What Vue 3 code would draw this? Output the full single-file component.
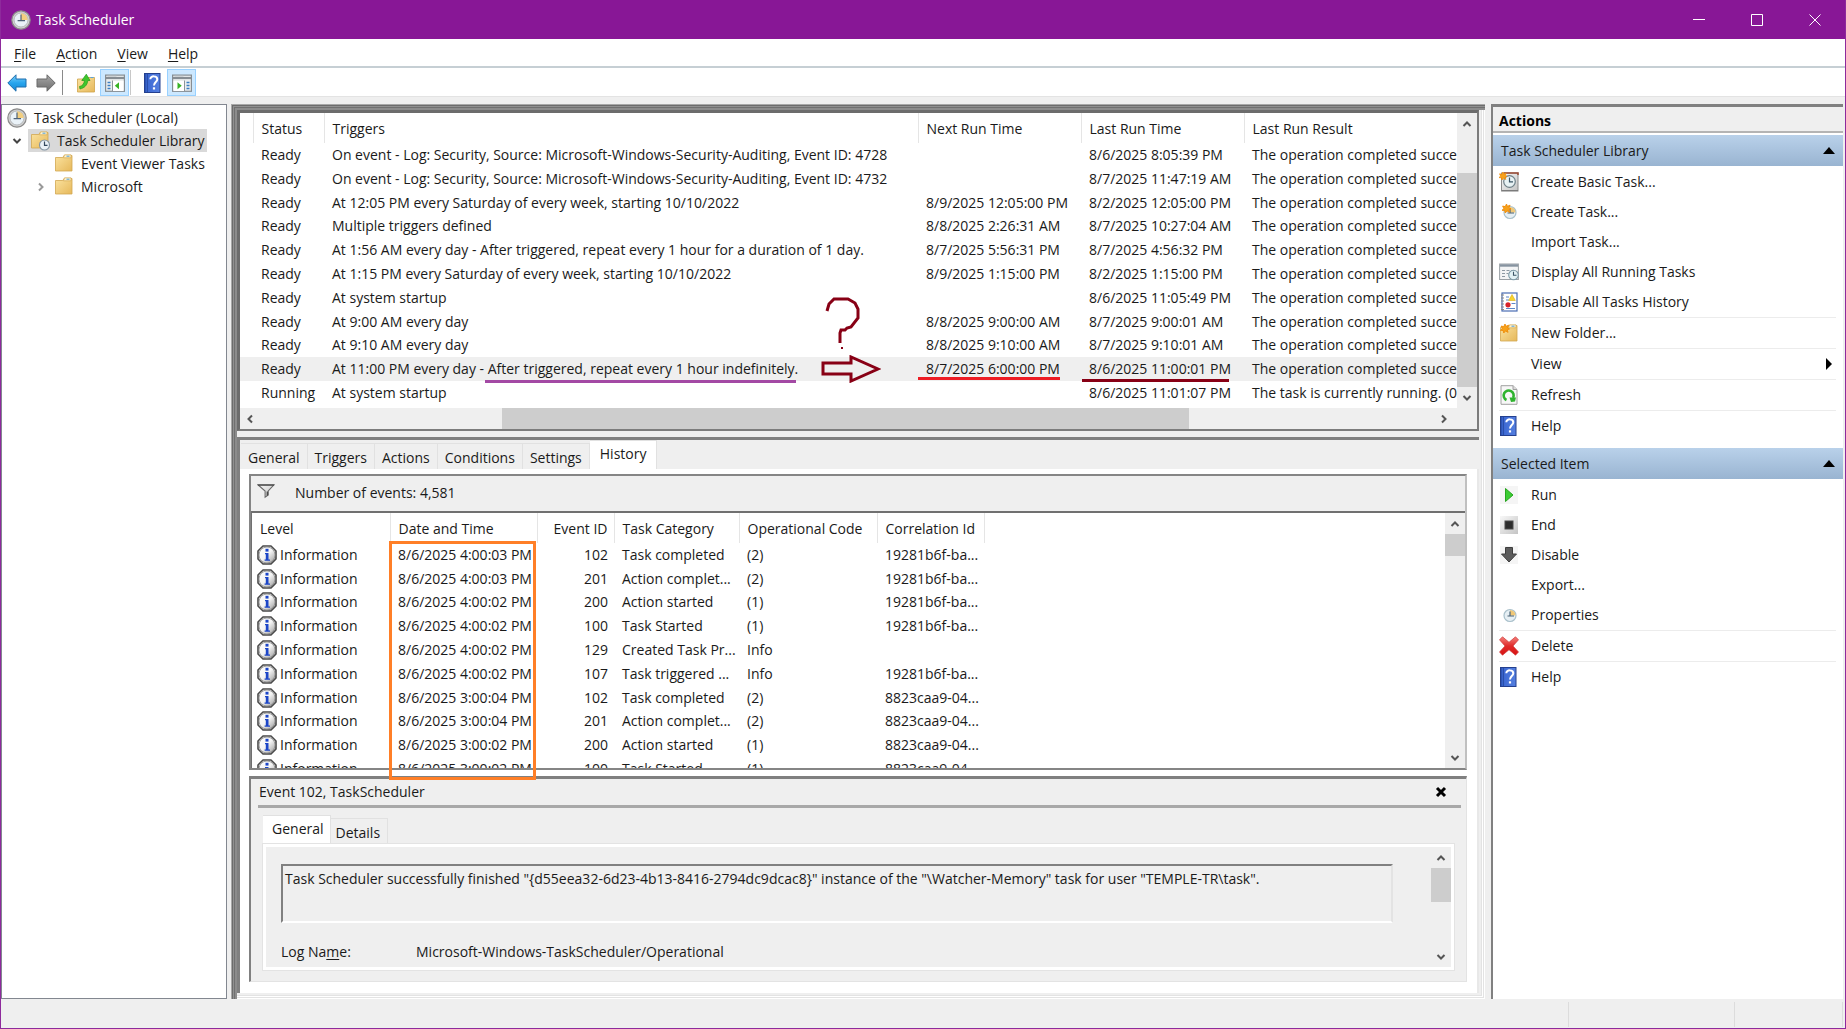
<script setup>
const menus = [['F', 'ile'], ['A', 'ction'], ['V', 'iew'], ['H', 'elp']]

const done = 'The operation completed successfully.'
const tasks = [
  { status: 'Ready', trigger: 'On event - Log: Security, Source: Microsoft-Windows-Security-Auditing, Event ID: 4728', next: '', last: '8/6/2025 8:05:39 PM', result: done },
  { status: 'Ready', trigger: 'On event - Log: Security, Source: Microsoft-Windows-Security-Auditing, Event ID: 4732', next: '', last: '8/7/2025 11:47:19 AM', result: done },
  { status: 'Ready', trigger: 'At 12:05 PM every Saturday of every week, starting 10/10/2022', next: '8/9/2025 12:05:00 PM', last: '8/2/2025 12:05:00 PM', result: done },
  { status: 'Ready', trigger: 'Multiple triggers defined', next: '8/8/2025 2:26:31 AM', last: '8/7/2025 10:27:04 AM', result: done },
  { status: 'Ready', trigger: 'At 1:56 AM every day - After triggered, repeat every 1 hour for a duration of 1 day.', next: '8/7/2025 5:56:31 PM', last: '8/7/2025 4:56:32 PM', result: done },
  { status: 'Ready', trigger: 'At 1:15 PM every Saturday of every week, starting 10/10/2022', next: '8/9/2025 1:15:00 PM', last: '8/2/2025 1:15:00 PM', result: done },
  { status: 'Ready', trigger: 'At system startup', next: '', last: '8/6/2025 11:05:49 PM', result: done },
  { status: 'Ready', trigger: 'At 9:00 AM every day', next: '8/8/2025 9:00:00 AM', last: '8/7/2025 9:00:01 AM', result: done },
  { status: 'Ready', trigger: 'At 9:10 AM every day', next: '8/8/2025 9:10:00 AM', last: '8/7/2025 9:10:01 AM', result: done },
  { status: 'Ready', trigger: 'At 11:00 PM every day - After triggered, repeat every 1 hour indefinitely.', next: '8/7/2025 6:00:00 PM', last: '8/6/2025 11:00:01 PM', result: done, selected: true },
  { status: 'Running', trigger: 'At system startup', next: '', last: '8/6/2025 11:01:07 PM', result: 'The task is currently running. (0x' },
]

const tabs = ['General', 'Triggers', 'Actions', 'Conditions', 'Settings', 'History']

const events = [
  ['8/6/2025 4:00:03 PM', 102, 'Task completed', '(2)', '19281b6f-ba...'],
  ['8/6/2025 4:00:03 PM', 201, 'Action complet...', '(2)', '19281b6f-ba...'],
  ['8/6/2025 4:00:02 PM', 200, 'Action started', '(1)', '19281b6f-ba...'],
  ['8/6/2025 4:00:02 PM', 100, 'Task Started', '(1)', '19281b6f-ba...'],
  ['8/6/2025 4:00:02 PM', 129, 'Created Task Pr...', 'Info', ''],
  ['8/6/2025 4:00:02 PM', 107, 'Task triggered ...', 'Info', '19281b6f-ba...'],
  ['8/6/2025 3:00:04 PM', 102, 'Task completed', '(2)', '8823caa9-04...'],
  ['8/6/2025 3:00:04 PM', 201, 'Action complet...', '(2)', '8823caa9-04...'],
  ['8/6/2025 3:00:02 PM', 200, 'Action started', '(1)', '8823caa9-04...'],
  ['8/6/2025 3:00:02 PM', 100, 'Task Started', '(1)', '8823caa9-04...'],
]

const groups = [
  {
    title: 'Task Scheduler Library',
    items: [
      { label: 'Create Basic Task...', icon: 'basic' },
      { label: 'Create Task...', icon: 'create' },
      { label: 'Import Task...' },
      { label: 'Display All Running Tasks', icon: 'running' },
      { label: 'Disable All Tasks History', icon: 'history' },
      { label: 'New Folder...', icon: 'newfolder', line: true },
      { label: 'View', line: true, more: true },
      { label: 'Refresh', icon: 'refresh', line: true },
      { label: 'Help', icon: 'help', line: true },
    ],
  },
  {
    title: 'Selected Item',
    items: [
      { label: 'Run', icon: 'run' },
      { label: 'End', icon: 'end' },
      { label: 'Disable', icon: 'disable' },
      { label: 'Export...' },
      { label: 'Properties', icon: 'props' },
      { label: 'Delete', icon: 'delete', line: true },
      { label: 'Help', icon: 'help', line: true },
    ],
  },
]
</script>

<template>
  <div class="window">
    <svg class="defs" aria-hidden="true">
      <defs>
        <linearGradient id="g-folder" x1="0" y1="0" x2="1" y2="1">
          <stop offset="0" stop-color="#fbe3a0" /><stop offset="1" stop-color="#e6b85a" />
        </linearGradient>
        <linearGradient id="g-blue" x1="0" y1="0" x2="0" y2="1">
          <stop offset="0" stop-color="#7fd0fa" /><stop offset=".5" stop-color="#27a5ee" /><stop offset="1" stop-color="#1787d2" />
        </linearGradient>
        <linearGradient id="g-grey" x1="0" y1="0" x2="0" y2="1">
          <stop offset="0" stop-color="#a8a8a8" /><stop offset="1" stop-color="#6c6c6c" />
        </linearGradient>
        <linearGradient id="g-help" x1="0" y1="0" x2="1" y2="0">
          <stop offset="0" stop-color="#24479f" /><stop offset=".15" stop-color="#3b67d2" /><stop offset="1" stop-color="#5580e0" />
        </linearGradient>
        <linearGradient id="g-info" x1="0" y1="0" x2="1" y2="1">
          <stop offset="0" stop-color="#ffffff" /><stop offset=".5" stop-color="#f4f4f4" /><stop offset="1" stop-color="#9a9a9a" />
        </linearGradient>
        <linearGradient id="g-red" x1="0" y1="0" x2="0" y2="1">
          <stop offset="0" stop-color="#f4817c" /><stop offset=".5" stop-color="#e02a2a" /><stop offset="1" stop-color="#d81212" />
        </linearGradient>
        <linearGradient id="g-panel" x1="0" y1="0" x2="1" y2="1">
          <stop offset="0" stop-color="#f8f8f8" /><stop offset="1" stop-color="#c4c4c4" />
        </linearGradient>
        <symbol id="i-clock" viewBox="0 0 20 20">
          <circle cx="10" cy="10" r="9.2" fill="#d2d2d2" stroke="#8a8a8a" stroke-width="1.200" />
          <circle cx="10" cy="10" r="7" fill="#eaf2f8" stroke="#a9adb0" stroke-width=".8" />
          <path d="M10 10V3.200a6.800 6.800 0 0 1 6.800 6.800z" fill="#f3cf80" />
          <path d="M10 4.600V10.600M6.600 10.600H14" stroke="#4f6378" stroke-width="1.200" fill="none" />
        </symbol>
        <symbol id="i-folder" viewBox="0 0 20 20">
          <path d="M1.500 3.500V17h16.500V1.500h-8l-1.200 2z" fill="url(#g-folder)" stroke="#d2a750" stroke-width=".8" />
          <path d="M10.500 .800h6.500v3h-7.500z" fill="#fff4d2" stroke="#d2a750" stroke-width=".7" />
          <path d="M12.500 2.200h3" stroke="#5aa5dc" stroke-width="1.100" />
        </symbol>
        <symbol id="i-library" viewBox="0 0 20 20">
          <use href="#i-folder" />
          <circle cx="14.500" cy="14" r="5" fill="#eaf2f8" stroke="#8395a4" stroke-width="1.100" />
          <path d="M14.500 10.500v3.800h3" stroke="#34495e" stroke-width="1.200" fill="none" />
        </symbol>
        <symbol id="i-back" viewBox="0 0 20 20">
          <path d="M.8 10L9 1.800V6h10v8H9v4.200z" fill="url(#g-blue)" stroke="#1f6fae" />
        </symbol>
        <symbol id="i-forward" viewBox="0 0 20 20">
          <path d="M19.200 10L11 1.800V6H1v8h10v4.200z" fill="url(#g-grey)" stroke="#6b6b6b" />
        </symbol>
        <symbol id="i-up" viewBox="0 0 20 20">
          <path d="M1.500 6V19h17V4.500H10L9 6z" fill="url(#g-folder)" stroke="#cfa34a" stroke-width=".8" />
          <path d="M14.500 4.500h3" stroke="#5aa5dc" />
          <path d="M3.500 13.500c3-.6 4.500-2.500 5-6H5.800L10.300 1.200 14 7.500h-2.200c-.5 5-3.600 7.500-7.800 8.500z" fill="#3fc62d" stroke="#239a1a" stroke-width=".7" />
        </symbol>
        <symbol id="i-pane-left" viewBox="0 0 20 20">
          <rect x=".6" y="2.100" width="18.800" height="16.200" fill="#eceeef" stroke="#868d93" stroke-width="1.200" />
          <path d="M1 5h18" stroke="#868d93" stroke-width="2.200" />
          <path d="M2.500 3.300h9" stroke="#c7ccd0" />
          <rect x="7.500" y="8" width="11" height="10" fill="#fff" />
          <path d="M7.500 7.500V18" stroke="#8d949a" />
          <path d="M2.500 9.500h3M2.500 12.500h3M2.500 15.500h3" stroke="#3b7fc4" stroke-width="1.300" />
          <path d="M14 9.300v7l-4.200-3.500z" fill="#37b324" />
        </symbol>
        <symbol id="i-pane-right" viewBox="0 0 20 20">
          <rect x=".6" y="2.100" width="18.800" height="16.200" fill="#eceeef" stroke="#868d93" stroke-width="1.200" />
          <path d="M1 5h18" stroke="#868d93" stroke-width="2.200" />
          <path d="M2.500 3.300h9" stroke="#c7ccd0" />
          <rect x="1.500" y="8" width="11" height="10" fill="#fff" />
          <path d="M12.500 7.500V18" stroke="#8d949a" />
          <path d="M14.500 9.500h3M14.500 12.500h3M14.500 15.500h3" stroke="#3b7fc4" stroke-width="1.300" />
          <path d="M5.500 9.300v7l4.200-3.500z" fill="#37b324" />
        </symbol>
        <symbol id="i-help" viewBox="0 0 20 20">
          <rect x="1.500" y=".5" width="15.500" height="19" fill="url(#g-help)" stroke="#24408f" />
          <path d="M4.500 1v18" stroke="#24479f" stroke-width=".8" />
          <path d="M7.300 6.300c0-4 7-3.800 7 0 0 2.700-3.300 2.900-3.300 6.200" stroke="#fff" stroke-width="2" fill="none" />
          <rect x="9.900" y="14.300" width="2.200" height="2.200" fill="#fff" />
        </symbol>
        <symbol id="i-star" viewBox="0 0 10 10">
          <path d="M5 0l1 2.600L9 1.300 7.800 4.200 10 5.500 7.500 6.400 8.400 9.300 5.600 7.700 3.600 10 3 7.200 0 7 2.100 5 .7 2.300l2.900.6z" fill="#f7a11a" stroke="#ee8c0a" stroke-width="1" />
        </symbol>
        <symbol id="i-basic" viewBox="0 0 20 20">
          <rect x="2.500" y="1" width="16.500" height="18" fill="url(#g-panel)" stroke="#8c8c8c" />
          <path d="M5 1h14v2" stroke="#9b4a33" stroke-width="1.500" fill="none" />
          <path d="M3 18.600h16" stroke="#777" />
          <circle cx="10.500" cy="9.500" r="5.800" fill="#e8f2f4" stroke="#6f8088" stroke-width="1.200" />
          <path d="M10.500 5.500v4.300H14" stroke="#3b5565" stroke-width="1.200" fill="none" />
          <use href="#i-star" x="0" y="0" width="8" height="8" />
        </symbol>
        <symbol id="i-props" viewBox="0 0 20 20">
          <circle cx="11" cy="10.500" r="6" fill="#e6eff4" stroke="#a9c0cb" stroke-width="1.200" />
          <path d="M11 10.500V5a5.500 5.500 0 0 1 5.500 5.500z" fill="#f1c877" />
          <path d="M11 6.500v4.500h4M8.500 11h2" stroke="#4b6375" stroke-width="1.200" fill="none" />
        </symbol>
        <symbol id="i-create" viewBox="0 0 20 20">
          <use href="#i-props" />
          <use href="#i-star" x="3" y="2" width="9" height="9" />
        </symbol>
        <symbol id="i-running" viewBox="0 0 20 20">
          <rect x=".6" y="2" width="18.800" height="15.500" fill="#f3f4f5" stroke="#9aa0a5" />
          <path d="M1 3.500h18" stroke="#8693a0" stroke-width="2.400" />
          <path d="M3 8.500h3M7.500 8.500h3M12 8.500h3M3 11.500h3M7.500 11.500h2M3 14.500h3" stroke="#8c98a2" stroke-width="1.200" />
          <circle cx="14.500" cy="13" r="4.800" fill="#e2f1f4" stroke="#7d9aa6" stroke-width="1.100" />
          <path d="M14.500 9.700v3.600h3" stroke="#3b5565" stroke-width="1.100" fill="none" />
        </symbol>
        <symbol id="i-history" viewBox="0 0 20 20">
          <rect x="3" y="1" width="15" height="18" fill="#fff" stroke="#4a6db3" stroke-width="1.200" />
          <path d="M2 3h3M2 6h3M2 9h3M2 12h3M2 15h3M2 17.500h3" stroke="#888" stroke-width="1.200" />
          <path d="M7 5h3M7 8h3M12.500 11.500h4M7 16.500h9" stroke="#5d86c8" stroke-width="1.100" />
          <path d="M13 2.500l3.300 6h-6.600z" fill="#f8d431" stroke="#d8ac12" stroke-width=".6" />
          <circle cx="9" cy="12.800" r="2.600" fill="#d8232a" />
        </symbol>
        <symbol id="i-newfolder" viewBox="0 0 20 20">
          <use href="#i-folder" y="1" />
          <use href="#i-star" x="1" y="1" width="10" height="9" />
        </symbol>
        <symbol id="i-refresh" viewBox="0 0 20 20">
          <path d="M2 .7h12L18 4.500V19.300H2z" fill="#f7f7f7" stroke="#a0a0a0" />
          <path d="M14 .7V4.500h4" fill="#ddd" stroke="#a0a0a0" />
          <path d="M7.500 15A5 5 0 1 1 14 13" stroke="#2fb32f" stroke-width="2.600" fill="none" />
          <path d="M10.500 12.500h6.500l-1 4-4 .5z" fill="#2fb32f" />
        </symbol>
        <symbol id="i-run" viewBox="0 0 20 20">
          <rect x="1" y="1" width="18" height="18" fill="#f5f5f5" />
          <path d="M6.500 3.500v13l7.500-6.500z" fill="#3ccc33" stroke="#27a41f" />
        </symbol>
        <symbol id="i-end" viewBox="0 0 20 20">
          <rect x="1" y="1" width="18" height="18" fill="url(#g-panel)" />
          <rect x="6" y="6" width="8" height="8" fill="#2c2c2c" stroke="#4a4a4a" />
        </symbol>
        <symbol id="i-disable" viewBox="0 0 20 20">
          <rect x="1" y="1" width="18" height="18" fill="#f5f5f5" />
          <path d="M6.500 2.500h7V9H17.500l-7.500 8-7.500-8h4z" fill="#5c5c5c" stroke="#3e3e3e" />
        </symbol>
        <symbol id="i-delete" viewBox="0 0 20 20">
          <path d="M3.500.8L10 6.300 16.500.8l3 3L14 10l5.500 6-3 3.200L10 13.700 3.500 19.200l-3-3.200L6 10 .5 3.800z" fill="url(#g-red)" stroke="#cf3a3a" stroke-width=".7" />
        </symbol>
        <symbol id="i-info" viewBox="0 0 20 20">
          <path d="M6 1h8l5 5v8l-5 5H6l-5-5V6z" fill="url(#g-info)" stroke="#4a4a4a" stroke-width="1.600" stroke-linejoin="round" />
          <circle cx="10" cy="10" r="8" fill="url(#g-info)" stroke="#8c8c8c" stroke-width=".8" />
          <rect x="8.500" y="3.800" width="3" height="2.800" fill="#1c46c8" />
          <path d="M8 7.900h3.500v6.600H13v1.300H7.600v-1.300h1.200V9.200H8z" fill="#1c46c8" />
        </symbol>
        <symbol id="i-filter" viewBox="0 0 20 16">
          <path d="M1 1h18l-6.500 7v4.500L9 15V8z" fill="url(#g-panel)" stroke="#6a6a6a" stroke-width="1.200" />
          <path d="M1 1.500h18M11.500 8.500V13" stroke="#4a4a4a" stroke-width="1.600" />
        </symbol>
        <symbol id="i-chev" viewBox="0 0 10 10">
          <path d="M1.500 7L5 3.500 8.500 7" fill="none" stroke="currentColor" stroke-width="2" />
        </symbol>
      </defs>
    </svg>

    <header class="title-bar">
      <svg class="ico"><use href="#i-clock" /></svg>
      <h1>Task Scheduler</h1>
      <button class="win-btn" aria-label="Minimize"><svg viewBox="0 0 12 12"><path d="M0 5.500h12" /></svg></button>
      <button class="win-btn" aria-label="Maximize"><svg viewBox="0 0 12 12"><path d="M.5.5h11v11H.5z" /></svg></button>
      <button class="win-btn" aria-label="Close"><svg viewBox="0 0 12 12"><path d="M.5.5l11 11M11.500.5l-11 11" /></svg></button>
    </header>

    <nav class="menu-bar">
      <button v-for="[key, rest] in menus" :key="key"><u>{{ key }}</u>{{ rest }}</button>
    </nav>

    <div class="toolbar">
      <button class="tool" aria-label="Back"><svg class="ico"><use href="#i-back" /></svg></button>
      <button class="tool" aria-label="Forward"><svg class="ico"><use href="#i-forward" /></svg></button>
      <span class="divider"></span>
      <button class="tool" aria-label="Up one level"><svg class="ico"><use href="#i-up" /></svg></button>
      <button class="tool pressed" aria-label="Show console tree"><svg class="ico"><use href="#i-pane-left" /></svg></button>
      <span class="divider light"></span>
      <button class="tool" aria-label="Help"><svg class="ico"><use href="#i-help" /></svg></button>
      <button class="tool pressed" aria-label="Show action pane"><svg class="ico"><use href="#i-pane-right" /></svg></button>
    </div>

    <main class="body">
      <nav class="tree">
        <button class="node root"><svg class="ico"><use href="#i-clock" /></svg><span>Task Scheduler (Local)</span></button>
        <div class="branch">
          <svg class="twist down"><use href="#i-chev" /></svg>
          <button class="node current"><svg class="ico"><use href="#i-library" /></svg><span>Task Scheduler Library</span></button>
        </div>
        <div class="branch deep">
          <span class="twist"></span>
          <button class="node"><svg class="ico"><use href="#i-folder" /></svg><span>Event Viewer Tasks</span></button>
        </div>
        <div class="branch deep">
          <svg class="twist right"><use href="#i-chev" /></svg>
          <button class="node"><svg class="ico"><use href="#i-folder" /></svg><span>Microsoft</span></button>
        </div>
      </nav>

      <section class="centre">
        <div class="task-pane">
          <div class="task-view">
            <div class="clip">
              <table class="list tasks">
                <colgroup><col class="t0" /><col class="t1" /><col class="t2" /><col class="t3" /><col class="t3" /><col /></colgroup>
                <thead>
                  <tr><th></th><th>Status</th><th>Triggers</th><th>Next Run Time</th><th>Last Run Time</th><th>Last Run Result</th></tr>
                </thead>
                <tbody>
                  <tr v-for="(t, i) in tasks" :key="i" :class="{ selected: t.selected }">
                    <td></td><td>{{ t.status }}</td><td>{{ t.trigger }}</td><td>{{ t.next }}</td><td>{{ t.last }}</td><td>{{ t.result }}</td>
                  </tr>
                </tbody>
              </table>
            </div>
            <div class="vbar">
              <button aria-label="Scroll up"><svg><use href="#i-chev" /></svg></button>
              <i class="thumb task-thumb"></i>
              <button class="end" aria-label="Scroll down"><svg class="down"><use href="#i-chev" /></svg></button>
            </div>
          </div>
          <div class="hbar">
            <button aria-label="Scroll left"><svg class="left"><use href="#i-chev" /></svg></button>
            <i class="hthumb"></i>
            <button class="end" aria-label="Scroll right"><svg class="right"><use href="#i-chev" /></svg></button>
          </div>
          <i class="mark purple"></i>
          <i class="mark red"></i>
          <i class="mark maroon"></i>
          <svg class="question" viewBox="0 0 36 54"><path d="M2 14L4 7 9 2H23L30 6 33 12V21L26 30 22 31 20 33H16L15 36V46" /><path d="M17 50v2" class="dot" /></svg>
          <svg class="arrow" viewBox="0 0 60 28"><path d="M2 8h28V2l27 12-27 12v-7H2z" /></svg>
        </div>

        <div class="detail-pane">
          <div class="tabs" role="tablist">
            <button v-for="t in tabs" :key="t" role="tab" :class="['tab', { on: t === 'History' }]">{{ t }}</button>
          </div>
          <div class="page">
            <div class="events">
              <div class="events-head">
                <svg><use href="#i-filter" /></svg>
                <span>Number of events: 4,581</span>
              </div>
              <div class="events-list">
                <div class="clip">
                  <table class="list log">
                    <colgroup><col class="e0" /><col class="e1" /><col class="e2" /><col class="e3" /><col class="e4" /><col class="e5" /><col /></colgroup>
                    <thead>
                      <tr><th>Level</th><th>Date and Time</th><th class="num">Event ID</th><th>Task Category</th><th>Operational Code</th><th>Correlation Id</th><th></th></tr>
                    </thead>
                    <tbody>
                      <tr v-for="(e, i) in events" :key="i">
                        <td class="level"><div><svg class="ico"><use href="#i-info" /></svg>Information</div></td>
                        <td>{{ e[0] }}</td><td class="num">{{ e[1] }}</td><td>{{ e[2] }}</td><td>{{ e[3] }}</td><td>{{ e[4] }}</td><td></td>
                      </tr>
                    </tbody>
                  </table>
                </div>
                <div class="vbar">
                  <button aria-label="Scroll up"><svg><use href="#i-chev" /></svg></button>
                  <i class="thumb event-thumb"></i>
                  <button class="end" aria-label="Scroll down"><svg class="down"><use href="#i-chev" /></svg></button>
                </div>
              </div>
              <i class="highlight"></i>
            </div>

            <div class="event">
              <div class="event-head">
                <span>Event 102, TaskScheduler</span>
                <button aria-label="Close"><svg viewBox="0 0 12 12"><path d="M2 2l8 8M10 2l-8 8" /></svg></button>
              </div>
              <div class="tabs small" role="tablist">
                <button class="tab on" role="tab">General</button>
                <button class="tab" role="tab">Details</button>
              </div>
              <div class="event-page">
                <div class="event-body">
                  <textarea readonly aria-label="Event message" value="Task Scheduler successfully finished &quot;{d55eea32-6d23-4b13-8416-2794dc9dcac8}&quot; instance of the &quot;\Watcher-Memory&quot; task for user &quot;TEMPLE-TR\task&quot;."></textarea>
                  <dl><dt>Log Na<u>m</u>e:</dt><dd>Microsoft-Windows-TaskScheduler/Operational</dd></dl>
                </div>
                <div class="vbar">
                  <button aria-label="Scroll up"><svg><use href="#i-chev" /></svg></button>
                  <i class="thumb body-thumb"></i>
                  <button class="end" aria-label="Scroll down"><svg class="down"><use href="#i-chev" /></svg></button>
                </div>
              </div>
            </div>
          </div>
        </div>
      </section>

      <aside class="actions">
        <h2>Actions</h2>
        <section v-for="g in groups" :key="g.title" class="group">
          <button class="group-head">{{ g.title }}<svg viewBox="0 0 12 8"><path d="M6 0l6 7H0z" /></svg></button>
          <ul>
            <li v-for="a in g.items" :key="a.label" :class="{ line: a.line }">
              <button>
                <svg class="ico"><use v-if="a.icon" :href="'#i-' + a.icon" /></svg>
                <span>{{ a.label }}</span>
                <svg v-if="a.more" class="more" viewBox="0 0 8 12"><path d="M1 0l6 6-6 6z" /></svg>
              </button>
            </li>
          </ul>
        </section>
      </aside>
    </main>

    <footer class="status"><span></span><span></span><span></span></footer>
  </div>
</template>

<style>
body {
  margin: 0;
}
</style>

<style scoped>
* {
  box-sizing: border-box;
}
.window {
  display: flex;
  flex-direction: column;
  height: 100vh;
  background: #efefef;
  border: 1px solid #8e2a9c;
  border-top: 0;
  font: 14px/20px "Open Sans", "Noto Sans", sans-serif;
  color: #1a1a1a;
  overflow: hidden;
}
button {
  margin: 0;
  padding: 0;
  border: 0;
  background: none;
  font: inherit;
  color: inherit;
  text-align: left;
}
.defs {
  position: absolute;
  width: 0;
  height: 0;
}
.ico {
  display: block;
  flex: none;
  width: 20px;
  height: 20px;
}
u {
  text-underline-offset: 2px;
}

.title-bar {
  display: flex;
  align-items: center;
  flex: none;
  height: 39px;
  padding: 0 1px 0 10px;
  background: #881796;
  color: #fff;
}
.title-bar h1 {
  flex: 1;
  margin: 0 0 0 5px;
  font-size: 14px;
  font-weight: 400;
}
.win-btn {
  display: flex;
  align-items: center;
  justify-content: center;
  width: 58px;
  height: 39px;
}
.win-btn svg {
  width: 12px;
  height: 12px;
  fill: none;
  stroke: #fff;
}

.menu-bar {
  display: flex;
  align-items: center;
  gap: 20px;
  flex: none;
  height: 29px;
  padding: 2px 0 0 13px;
  background: #fff;
  border-bottom: 2px solid #c6cfd4;
}
.toolbar {
  display: flex;
  align-items: center;
  flex: none;
  height: 29px;
  padding: 1px 0 0 1px;
  background: #fff;
  border-bottom: 1px solid #e3e3e3;
}
.tool {
  display: flex;
  align-items: center;
  justify-content: center;
  width: 29px;
  height: 27px;
}
.tool.pressed {
  background: #cce8ff;
  border: 1px solid #99d1ff;
}
.divider {
  width: 1px;
  height: 25px;
  margin: 0 8px 0 2px;
  background: #8a8a8a;
}
.divider.light {
  background: #c8c8c8;
  margin: 0 7px 0 1px;
}

.body {
  display: flex;
  flex: 1;
  min-height: 0;
  padding: 7px 2px 0 0;
}
.tree {
  flex: none;
  width: 226px;
  padding-top: 1px;
  background: #fff;
  border: 1px solid #828790;
  margin-right: 4px;
}
.branch {
  display: flex;
  align-items: center;
  padding-left: 10px;
}
.branch.deep {
  padding-left: 34px;
}
.node {
  display: flex;
  align-items: center;
  gap: 7px;
  height: 23px;
  padding: 0 2px;
}
.node.root {
  padding-left: 5px;
}
.node.current {
  background: #d9d9d9;
}
.twist {
  width: 10px;
  height: 10px;
  margin-right: 6px;
  color: #444;
}
.deep .twist {
  color: #999;
}
.down {
  transform: rotate(180deg);
}
.right {
  transform: rotate(90deg);
}
.left {
  transform: rotate(-90deg);
}

.centre {
  display: flex;
  flex-direction: column;
  gap: 6px;
  flex: 1;
  min-width: 0;
  padding: 6px;
  box-shadow:
    inset 1px 1px #a8a8a8, inset 2px 2px #6c6c6c, inset 3px 3px #909090,
    inset 4px 4px #707070, inset 6px 6px #8c8c8c,
    inset -1px -1px #fff, inset -2px -2px #e3e3e3, inset -3px -3px #fff,
    inset -4px -4px #e3e3e3, inset -5px -5px #efefef;
}
.task-pane {
  position: relative;
  flex: none;
  border: 3px solid;
  border-color: #6c6c6c #7c7c7c #7c7c7c #6c6c6c;
  border-right-width: 2px;
  border-bottom-width: 2px;
  background: #fff;
}
.task-view {
  display: flex;
  height: 295px;
}
.clip {
  flex: 1;
  min-width: 0;
  overflow: hidden;
  background: #fff;
}
.list {
  width: 100%;
  border-collapse: collapse;
  table-layout: fixed;
}
.list th,
.list td {
  padding: 0 0 0 8px;
  font-weight: 400;
  text-align: left;
  white-space: nowrap;
  overflow: hidden;
}
.list th {
  height: 30px;
  padding-top: 2px;
  border-right: 1px solid #e5e5e5;
}
.list th:last-child {
  border-right: 0;
}
.list .num {
  padding-left: 0;
  padding-right: 6px;
  text-align: right;
}
.tasks {
  height: 292px;
}
.log {
  height: 268px;
}
.selected {
  background: #efefef;
}
.t0 { width: 13px; }
.t1 { width: 71px; }
.t2 { width: 594px; }
.t3 { width: 163px; }
.e0 { width: 138px; }
.e1 { width: 147px; }
.e2 { width: 77px; }
.e3 { width: 125px; }
.e4 { width: 138px; }
.e5 { width: 107px; }
.list .level {
  padding-left: 5px;
}
.level div {
  display: flex;
  gap: 3px;
}

.vbar {
  display: flex;
  flex-direction: column;
  flex: none;
  width: 20px;
  background: #efefef;
}
.vbar button,
.hbar button {
  display: flex;
  align-items: center;
  justify-content: center;
  width: 20px;
  height: 21px;
  color: #555;
}
.vbar svg,
.hbar svg {
  width: 10px;
  height: 10px;
}
.vbar .end {
  margin-top: auto;
}
.hbar .end {
  margin-left: auto;
  margin-right: 23px;
}
.thumb,
.hthumb {
  background: #cdcdcd;
}
.task-thumb {
  height: 214px;
  margin-top: 39px;
}
.event-thumb {
  height: 22px;
}
.body-thumb {
  height: 34px;
}
.hbar {
  display: flex;
  height: 21px;
  background: #efefef;
}
.hthumb {
  width: 687px;
  margin-left: 242px;
}

.mark {
  position: absolute;
  height: 3px;
}
.mark.purple {
  left: 245px;
  top: 267px;
  width: 311px;
  background: #a349a4;
}
.mark.red {
  left: 678px;
  top: 264px;
  width: 142px;
  background: #ed1c24;
}
.mark.maroon {
  left: 842px;
  top: 266px;
  width: 147px;
  background: #880015;
}
.question,
.arrow {
  position: absolute;
  fill: none;
  stroke: #880015;
  stroke-width: 3px;
}
.question {
  left: 585px;
  top: 184px;
  width: 36px;
  height: 54px;
}
.question .dot {
  stroke-width: 2px;
}
.arrow {
  left: 581px;
  top: 242px;
  width: 60px;
  height: 28px;
}

.detail-pane {
  display: flex;
  flex-direction: column;
  flex: 1;
  min-height: 0;
  border-top: 3px solid #808080;
  border-left: 3px solid #808080;
}
.tabs {
  display: flex;
  align-items: flex-end;
  flex: none;
  height: 29px;
  padding-left: 1px;
}
.tab {
  height: 26px;
  padding: 2px 7px 0;
  border: 1px solid #e1e1e1;
  border-width: 1px 1px 0 0;
  white-space: nowrap;
}
.tab.on {
  height: 29px;
  padding: 0 10px 2px;
  background: #fff;
}
.page {
  display: flex;
  flex-direction: column;
  gap: 6px;
  flex: 1;
  min-height: 0;
  padding: 5px 10px 11px 9px;
  background: #fff;
  border-right: 2px solid #e8e8e8;
}
.events {
  position: relative;
  flex: none;
  border: 2px solid #858585;
  border-right-color: #c0c0c0;
}
.events-head {
  display: flex;
  gap: 20px;
  height: 35px;
  padding: 7px 0 0 6px;
  background: #efefef;
}
.events-head svg {
  width: 18px;
  height: 16px;
}
.events-list {
  display: flex;
  height: 257px;
  border-top: 2px solid #707070;
  border-left: 1px solid #707070;
}
.highlight {
  position: absolute;
  left: 138px;
  top: 65px;
  width: 147px;
  height: 239px;
  border: 3px solid #ff7f27;
}

.event {
  display: flex;
  flex-direction: column;
  flex: 1;
  min-height: 0;
  padding: 0 12px 11px;
  background: #efefef;
  border: 3px solid #808080;
  border-width: 3px 1px 1px 2px;
  border-right-color: #e3e3e3;
  border-bottom-color: #e3e3e3;
}
.event-head {
  display: flex;
  justify-content: space-between;
  align-items: center;
  flex: none;
  height: 29px;
  margin: 0 -7px 7px -5px;
  padding: 0 14px 0 1px;
  border-bottom: 3px solid #a8a8a8;
}
.event-head svg {
  display: block;
  width: 12px;
  height: 12px;
  stroke: #000;
  stroke-width: 3px;
}
.tabs.small {
  padding-left: 0;
}
.small .tab {
  padding-left: 5px;
}
.small .tab.on {
  padding-left: 9px;
  padding-right: 6px;
}
.event-page {
  display: flex;
  flex: 1;
  min-height: 0;
  border: 3px solid #fff;
  outline: 1px solid #e3e3e3;
}
.event-body {
  flex: 1;
  min-width: 0;
  overflow: hidden;
  padding: 17px 38px 0 15px;
}
textarea {
  display: block;
  width: 100%;
  height: 59px;
  margin: 0;
  padding: 3px 2px;
  border: 2px solid;
  border-color: #808080 #e3e3e3 #fff #808080;
  border-radius: 0;
  outline: 0;
  resize: none;
  background: #efefef;
  font: inherit;
  color: inherit;
}
dl {
  display: flex;
  margin: 19px 0 0;
}
dt {
  width: 135px;
}
dd {
  margin: 0;
}

.actions {
  flex: none;
  width: 352px;
  margin-left: 6px;
  background: #fff;
  border-top: 3px solid #808080;
  border-left: 2px solid #808080;
}
.actions h2 {
  height: 26px;
  margin: 0 0 2px;
  padding: 4px 6px 0;
  background: #efefef;
  border-bottom: 2px solid #b4b4b4;
  font-size: 14px;
  font-weight: 700;
  line-height: 20px;
  color: #000;
}
.group-head {
  display: flex;
  align-items: center;
  justify-content: space-between;
  width: 100%;
  height: 31px;
  padding: 1px 8px 0;
  background: linear-gradient(#b9d1ea, #99b4d1);
}
.group-head svg {
  width: 12px;
  height: 8px;
}
.group ul {
  margin: 0 7px 7px 6px;
  padding: 1px 0 0;
  list-style: none;
}
.group li.line {
  border-top: 1px solid #ececec;
}
.group li button {
  display: flex;
  align-items: center;
  gap: 12px;
  width: 100%;
  height: 30px;
}
.more {
  width: 8px;
  height: 12px;
  margin: 0 3px 0 auto;
}

.status {
  display: flex;
  justify-content: flex-end;
  flex: none;
  height: 29px;
  padding: 3px 2px 1px 0;
}
.status span {
  width: 166px;
  border-right: 1px solid #dcdcdc;
}
.status span:last-child {
  width: 108px;
}
</style>
